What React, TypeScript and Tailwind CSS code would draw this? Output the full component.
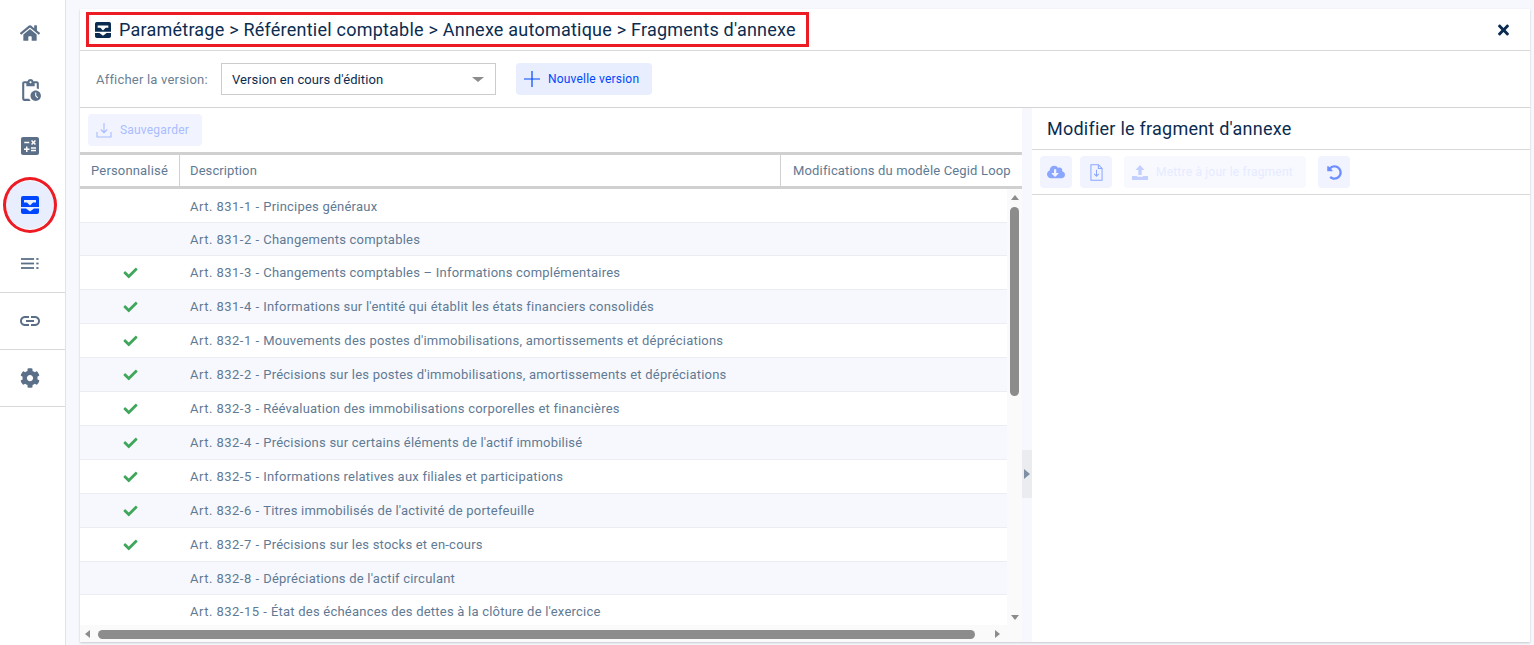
import type { ReactNode } from "react";
import { FaCheck, FaCloudDownloadAlt, FaCog, FaHome, FaTimes, FaUndoAlt } from "react-icons/fa";
import { MdCalculate, MdLink, MdOutlinePendingActions } from "react-icons/md";

const rows = [
  { ref: "Art. 831-1 - ", label: "Principes généraux", custom: false, h: "h-[33px] pt-px" },
  { ref: "Art. 831-2 - ", label: "Changements comptables", custom: false, h: "h-[33px] pt-px" },
  { ref: "Art. 831-3 - ", label: "Changements comptables – Informations complémentaires", custom: true, h: "h-[34px]" },
  { ref: "Art. 831-4 - ", label: "Informations sur l'entité qui établit les états financiers consolidés", custom: true, h: "h-[34px]" },
  { ref: "Art. 832-1 - ", label: "Mouvements des postes d'immobilisations, amortissements et dépréciations", custom: true, h: "h-[34px]" },
  { ref: "Art. 832-2 - ", label: "Précisions sur les postes d'immobilisations, amortissements et dépréciations", custom: true, h: "h-[34px]" },
  { ref: "Art. 832-3 - ", label: "Réévaluation des immobilisations corporelles et financières", custom: true, h: "h-[34px]" },
  { ref: "Art. 832-4 - ", label: "Précisions sur certains éléments de l'actif immobilisé", custom: true, h: "h-[34px]" },
  { ref: "Art. 832-5 - ", label: "Informations relatives aux filiales et participations", custom: true, h: "h-[34px]" },
  { ref: "Art. 832-6 - ", label: "Titres immobilisés de l'activité de portefeuille", custom: true, h: "h-[34px]" },
  { ref: "Art. 832-7 - ", label: "Précisions sur les stocks et en-cours", custom: true, h: "h-[34px]" },
  { ref: "Art. 832-8 - ", label: "Dépréciations de l'actif circulant", custom: false, h: "h-[33px] pt-px" },
  { ref: "Art. 832-15 - ", label: "État des échéances des dettes à la clôture de l'exercice", custom: false, h: "h-[34px]" },
];

function InboxIcon({ className }: { className: string }) {
  return (
    <svg viewBox="0 0 18 18" className={className} fill="currentColor">
      <path
        fillRule="evenodd"
        d="M2 0h14a2 2 0 0 1 2 2v9H0V2a2 2 0 0 1 2-2zM3 4v2.500h3L9 9.500l3-3h3V4z"
      />
      <path d="M0 12.500h5L9 15.500l4-3h5V16a2 2 0 0 1-2 2H2a2 2 0 0 1-2-2z" />
    </svg>
  );
}

function ListIcon({ className }: { className: string }) {
  return (
    <svg viewBox="0 0 20 12" className={className} fill="currentColor">
      <rect x="0" y="0" width="14.500" height="2" />
      <rect x="0" y="5" width="14.500" height="2" />
      <rect x="0" y="10" width="14.500" height="2" />
      <rect x="17" y="0" width="2.500" height="2" />
      <rect x="17" y="5" width="2.500" height="2" />
      <rect x="17" y="10" width="2.500" height="2" />
    </svg>
  );
}

function DocDownIcon() {
  return (
    <svg viewBox="0 0 14 18" className="h-[17px] w-[13px]" fill="none" stroke="currentColor" strokeWidth="1.100">
      <path d="M1 .6h8l4 4v12.800H1z" />
      <path d="M9 .6v4h4" />
      <path d="M7 6v7M4.500 10.500 7 13l2.500-2.500" />
    </svg>
  );
}

function UploadIcon() {
  return (
    <svg viewBox="0 0 16 16" className="h-4 w-4" fill="currentColor">
      <path d="M8 1l4.500 5H9.700v5H6.300V6H3.500z" />
      <path d="M0 12h5v.8h6V12h5v4H0z" />
    </svg>
  );
}

function SaveIcon() {
  return (
    <svg viewBox="0 0 16 16" className="h-4 w-4" fill="none" stroke="currentColor" strokeWidth="1.100">
      <path d="M8 1v9.500M4.800 7.500 8 10.700l3.200-3.200" />
      <path d="M1 10v5h14v-5" />
    </svg>
  );
}

function NavItem({ children, active, className }: { children: ReactNode; active?: boolean; className: string }) {
  return (
    <div className={`flex items-center justify-center pr-[5px] ${className}`}>
      <div className={`flex h-[48px] w-[48px] items-center justify-center rounded-full ${active ? "bg-[#e8eefd] text-[#0046ff]" : "text-[#5b7088]"}`}>
        {children}
      </div>
    </div>
  );
}

function IconButton({ children }: { children: ReactNode }) {
  return (
    <div className="flex h-8 w-8 items-center justify-center rounded bg-[#f1f4ff] text-[#8ba6ff]">{children}</div>
  );
}

export default function App() {
  return (
    <div className="relative flex h-[645px] w-[1534px] overflow-hidden bg-[#f7f8fd] font-['Roboto',sans-serif]">
      {/* Sidebar */}
      <aside className="flex h-full w-[66px] shrink-0 flex-col border-r border-[#dfe3ec] bg-white pt-[5px]">
        <NavItem className="h-[56px]"><FaHome className="h-[20px] w-[20px]" /></NavItem>
        <NavItem className="h-[58px]"><MdOutlinePendingActions className="h-[25px] w-[25px]" /></NavItem>
        <NavItem className="h-[54px]"><MdCalculate className="h-[24px] w-[24px]" /></NavItem>
        <NavItem active className="h-[61px] pt-[3px]"><InboxIcon className="h-[18px] w-[18px]" /></NavItem>
        <NavItem className="h-[59px] border-b border-[#d9d9d9]"><ListIcon className="h-[11px] w-[18px]" /></NavItem>
        <NavItem className="h-[57px] border-b border-[#d9d9d9]"><MdLink className="h-[24px] w-[24px]" /></NavItem>
        <NavItem className="h-[57px] border-b border-[#d9d9d9]"><FaCog className="h-[20px] w-[20px]" /></NavItem>
      </aside>

      {/* Main card */}
      <main className="mt-[9px] mb-[3px] ml-[14px] mr-[4px] flex min-w-0 flex-1 flex-col bg-white shadow-[0_1px_2px_rgba(0,0,0,0.2)]">
        <header className="flex h-[42px] shrink-0 items-center justify-between border-b border-[#d9d9d9] pl-[15px] pr-[20px] text-[#0b2c50]">
          <div className="flex items-center gap-2">
            <InboxIcon className="h-4 w-4" />
            <span className="text-[18px] leading-none tracking-[0.225px]">Paramétrage &gt; Référentiel comptable &gt; Annexe automatique &gt; Fragments d'annexe</span>
          </div>
          <FaTimes className="h-4 w-[13px]" />
        </header>

        <div className="flex h-[57px] shrink-0 items-center border-b border-[#d4d4d4] pl-4">
          <span className="w-[125px] pt-px text-[13px] tracking-[0.2px] text-[#6c7f93]">Afficher la version:</span>
          <div className="flex h-8 w-[275px] items-center justify-between border border-[#cccccc] pl-[10px] pr-[11px] text-[13px] tracking-[0.1px] text-[#0b2c50]">
            <span className="pt-px">Version en cours d'édition</span>
            <span className="h-0 w-0 border-x-[6px] border-t-[5px] border-x-transparent border-t-[#8c8c8c]" />
          </div>
          <div className="ml-5 flex h-8 w-[136px] items-center gap-2 rounded bg-[#e8eefd] pl-2 text-[12px] tracking-[0.2px] text-[#0046ff]">
            <svg viewBox="0 0 16 16" className="h-4 w-4" fill="none" stroke="currentColor" strokeWidth="1.200">
              <path d="M8 0v16M0 8h16" />
            </svg>
            <span>Nouvelle version</span>
          </div>
        </div>

        <div className="flex min-h-0 flex-1">
          {/* Left pane */}
          <section className="flex w-[942px] shrink-0 flex-col overflow-hidden">
            <div className="flex h-[44px] shrink-0 items-center pl-2">
              <div className="flex h-8 w-[114px] items-center gap-2 rounded bg-[#f1f4ff] pl-2 text-[12px] tracking-[0.2px] text-[#a9bcff]">
                <SaveIcon />
                <span>Sauvegarder</span>
              </div>
            </div>
            <div className="flex h-[37px] shrink-0 items-center border-y-[3px] border-[#d0d0d0] text-[13px] text-[#5f7a94]">
              <div className="flex h-full w-[100px] items-center justify-center border-r border-[#d0d0d0] tracking-[0.17px]">Personnalisé</div>
              <div className="flex h-full w-[601px] items-center border-r border-[#d0d0d0] pl-[10px] tracking-[0.1px]">Description</div>
              <div className="pl-3 tracking-[0.16px] whitespace-nowrap">Modifications du modèle Cegid Loop</div>
            </div>
            <div className="flex min-h-0 flex-1">
              <div className="min-w-0 flex-1 overflow-hidden pt-px">
                {rows.map((row, i) => (
                  <div key={row.ref} className={`flex ${row.h} items-center border-b border-[#ebedf3] text-[13px] text-[#5f7a94] ${i % 2 === 1 ? "bg-[#f7f8fd]" : "bg-white"}`}>
                    <div className="flex w-[100px] shrink-0 justify-center">
                      {row.custom && <FaCheck className="h-[14px] w-[15px] text-[#3fa75a]" />}
                    </div>
                    <div className="pl-[10px] tracking-[0.22px] whitespace-pre">
                      <span className="tracking-[0.48px]">{row.ref}</span>
                      {row.label}
                    </div>
                  </div>
                ))}
              </div>
              {/* Vertical scrollbar */}
              <div className="flex w-[15px] shrink-0 flex-col items-center bg-[#fafafa] pt-[6px]">
                <span className="h-0 w-0 border-x-[4px] border-b-[5px] border-x-transparent border-b-[#8c8c8c]" />
                <span className="mt-[7px] h-[189px] w-[9px] rounded-full bg-[#8c8c8c]" />
                <span className="mt-[219px] h-0 w-0 border-x-[4px] border-t-[5px] border-x-transparent border-t-[#8c8c8c]" />
              </div>
            </div>
            {/* Horizontal scrollbar */}
            <div className="flex h-[17px] shrink-0 items-center bg-[#fafafa] pl-[5px] pt-px">
              <span className="h-0 w-0 border-y-[4px] border-r-[5px] border-y-transparent border-r-[#8c8c8c]" />
              <span className="ml-[8px] h-[9px] w-[877px] rounded-full bg-[#8c8c8c]" />
              <span className="ml-5 h-0 w-0 border-y-[4px] border-l-[5px] border-y-transparent border-l-[#8c8c8c]" />
            </div>
          </section>

          {/* Splitter */}
          <div className="flex w-[10px] shrink-0 flex-col bg-[#f7f8fd]">
            <div className="mt-[342px] flex h-[48px] items-center justify-center bg-[#ebecf0]">
              <span className="h-0 w-0 border-y-[5px] border-l-[6px] border-y-transparent border-l-[#7f8fa3]" />
            </div>
          </div>

          {/* Right pane */}
          <section className="flex min-w-0 flex-1 flex-col">
            <div className="flex h-[42px] shrink-0 items-center border-b border-[#d9d9d9] pl-[15px] text-[18px] leading-none tracking-[0.24px] text-[#0b2c50]">
              Modifier le fragment d'annexe
            </div>
            <div className="flex h-[45px] shrink-0 items-center border-b border-[#d9d9d9] pl-2">
              <IconButton><FaCloudDownloadAlt className="h-[18px] w-[18px]" /></IconButton>
              <div className="ml-2"><IconButton><DocDownIcon /></IconButton></div>
              <div className="ml-3 flex h-8 w-[182px] items-center gap-2 rounded bg-[#f8f9ff] pl-2 text-[12px] tracking-[0.2px] text-[#e6ebff]">
                <span className="text-[#c3d0ff]"><UploadIcon /></span>
                <span>Mettre à jour le fragment</span>
              </div>
              <div className="ml-3"><IconButton><FaUndoAlt className="h-[15px] w-[15px] text-[#6f8fff]" /></IconButton></div>
            </div>
          </section>
        </div>
      </main>

      {/* Annotations */}
      <div className="absolute left-[86px] top-[12px] h-[35px] w-[723px] border-[3px] border-[#ed1c24]" />
      <div className="absolute left-[3px] top-[177px] h-[56px] w-[54px] rounded-[50%] border-[3px] border-[#ed1c24]" />
    </div>
  );
}
